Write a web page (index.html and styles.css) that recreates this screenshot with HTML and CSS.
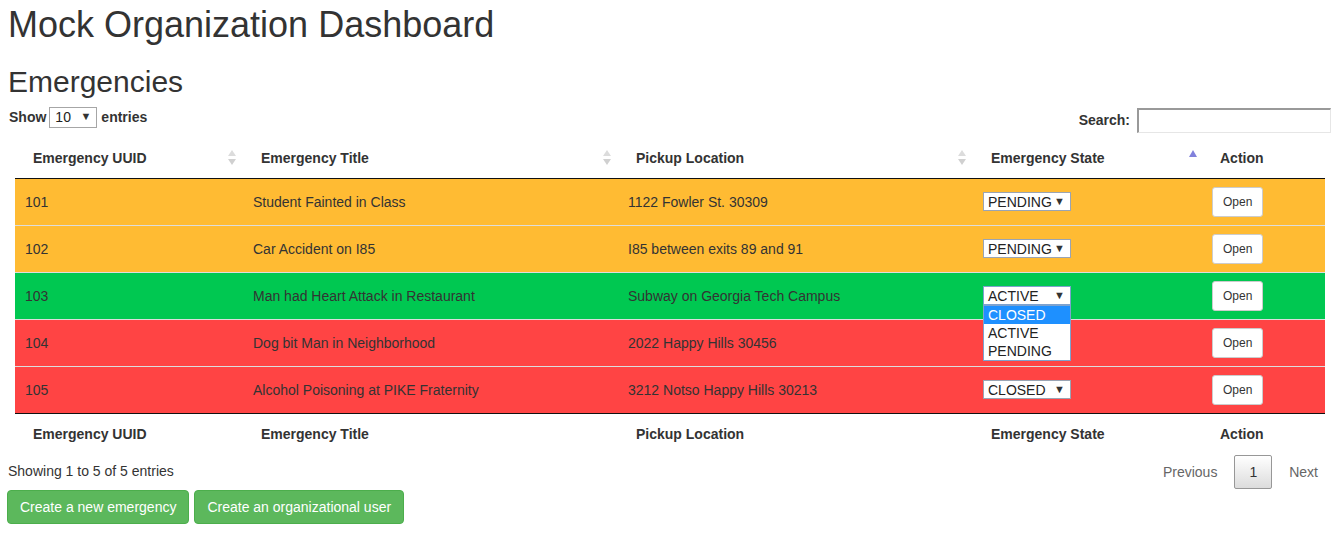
FILE: index.html
```html
<!DOCTYPE html>
<html>
<head>
<meta charset="utf-8">
<title>Mock Organization Dashboard</title>
<link rel="stylesheet" href="styles.css">
</head>
<body>
<div class="page">
  <h1 class="title">Mock Organization Dashboard</h1>
  <h2 class="subtitle">Emergencies</h2>

  <div class="dt-top">
    <label class="dt-length">Show <span class="sel sel-len">10<span class="arrow">&#9660;</span></span> entries</label>
    <label class="dt-filter">Search: <span class="search-input"></span></label>
  </div>

  <div class="table-wrap">
    <table class="dt">
      <colgroup>
        <col class="c1"><col class="c2"><col class="c3"><col class="c4"><col class="c5">
      </colgroup>
      <thead>
        <tr>
          <th class="sortable">Emergency UUID<span class="sort-both"><i class="up"></i><i class="down"></i></span></th>
          <th class="sortable">Emergency Title<span class="sort-both"><i class="up"></i><i class="down"></i></span></th>
          <th class="sortable">Pickup Location<span class="sort-both"><i class="up"></i><i class="down"></i></span></th>
          <th class="sortable">Emergency State<span class="sort-asc"></span></th>
          <th>Action</th>
        </tr>
      </thead>
      <tbody>
        <tr class="warn">
          <td>101</td><td>Student Fainted in Class</td><td>1122 Fowler St. 30309</td>
          <td><span class="sel sel-state">PENDING<span class="arrow">&#9660;</span></span></td>
          <td><button class="btn-open">Open</button></td>
        </tr>
        <tr class="warn">
          <td>102</td><td>Car Accident on I85</td><td>I85 between exits 89 and 91</td>
          <td><span class="sel sel-state">PENDING<span class="arrow">&#9660;</span></span></td>
          <td><button class="btn-open">Open</button></td>
        </tr>
        <tr class="ok">
          <td>103</td><td>Man had Heart Attack in Restaurant</td><td>Subway on Georgia Tech Campus</td>
          <td class="state-cell">
            <span class="sel sel-state sel-open">ACTIVE<span class="arrow">&#9660;</span></span>
            <ul class="dropdown">
              <li class="hl">CLOSED</li>
              <li>ACTIVE</li>
              <li>PENDING</li>
            </ul>
          </td>
          <td><button class="btn-open">Open</button></td>
        </tr>
        <tr class="danger">
          <td>104</td><td>Dog bit Man in Neighborhood</td><td>2022 Happy Hills 30456</td>
          <td></td>
          <td><button class="btn-open">Open</button></td>
        </tr>
        <tr class="danger">
          <td>105</td><td>Alcohol Poisoning at PIKE Fraternity</td><td>3212 Notso Happy Hills 30213</td>
          <td><span class="sel sel-state">CLOSED<span class="arrow">&#9660;</span></span></td>
          <td><button class="btn-open">Open</button></td>
        </tr>
      </tbody>
      <tfoot>
        <tr>
          <th>Emergency UUID</th>
          <th>Emergency Title</th>
          <th>Pickup Location</th>
          <th>Emergency State</th>
          <th>Action</th>
        </tr>
      </tfoot>
    </table>
  </div>

  <div class="dt-bottom">
    <div class="dt-info">Showing 1 to 5 of 5 entries</div>
    <div class="dt-paginate">
      <span class="pg disabled">Previous</span>
      <span class="pg current">1</span>
      <span class="pg disabled">Next</span>
    </div>
  </div>

  <div class="actions">
    <button class="btn-success">Create a new emergency</button>
    <button class="btn-success">Create an organizational user</button>
  </div>
</div>
</body>
</html>
```

FILE: styles.css
```css
* { box-sizing: border-box; }

html, body {
  margin: 0;
  padding: 0;
  background: #fff;
}

body {
  font-family: "Liberation Sans", Arial, sans-serif;
  font-size: 14px;
  line-height: 20px;
  color: #333;
}

.page {
  padding: 5px 8px 0 8px;
}

.title {
  font-size: 36px;
  line-height: 1.1;
  font-weight: 500;
  margin: 0 0 10px 0;
}

.subtitle {
  font-size: 30px;
  line-height: 1.1;
  font-weight: 500;
  margin: 20px 0 10px 0;
}

.dt-top {
  display: flex;
  justify-content: space-between;
  align-items: flex-start;
  padding-right: 4px;
  margin-top: -1px;
}

.dt-length {
  font-weight: bold;
  display: flex;
  align-items: center;
  height: 21px;
  padding-left: 1px;
}

.dt-filter {
  font-weight: bold;
  display: flex;
  align-items: center;
  gap: 7px;
  height: 25px;
  margin-top: 1px;
}

.search-input {
  display: block;
  width: 194px;
  height: 25px;
  border-style: solid;
  border-width: 2px 1px 1px 2px;
  border-color: #999 #e6e6e6 #e6e6e6 #999;
  background: #fff;
}

.sel {
  position: relative;
  display: inline-flex;
  align-items: center;
  background: #fff;
  border: 1px solid #a6a6a6;
  font-weight: normal;
  color: #222;
  font-size: 14px;
  line-height: 18px;
}

.sel .arrow {
  position: absolute;
  right: 5px;
  top: 0;
  font-size: 11px;
  line-height: 17px;
  color: #333;
}

.sel-len {
  width: 48px;
  height: 21px;
  padding-left: 5px;
  margin: 0 4px 0 3px;
}

.sel-state {
  width: 88px;
  height: 19px;
  padding-left: 4px;
  border-color: #9aa4b4;
}

.sel-open {
  border-color: #7da2ce;
}

.table-wrap {
  padding-left: 7px;
  margin-top: 5px;
}

.dt {
  width: 1310px;
  border-collapse: collapse;
  table-layout: fixed;
}

.c1 { width: 228px; }
.c2 { width: 375px; }
.c3 { width: 355px; }
.c4 { width: 229px; }
.c5 { width: 123px; }

.dt thead th {
  position: relative;
  text-align: left;
  font-weight: bold;
  padding: 10px 18px;
  line-height: 20px;
  border-bottom: 1px solid #111;
}

.dt tfoot th {
  text-align: left;
  font-weight: bold;
  padding: 10px 18px 6px 18px;
  line-height: 20px;
  border-top: 1px solid #111;
}

.sort-both {
  position: absolute;
  right: 7px;
  top: 12px;
  width: 8px;
  height: 15px;
  display: flex;
  flex-direction: column;
  justify-content: space-between;
}

.sort-both .up {
  display: block;
  width: 0;
  height: 0;
  border-left: 4px solid transparent;
  border-right: 4px solid transparent;
  border-bottom: 6px solid #dcdcdc;
}

.sort-both .down {
  display: block;
  width: 0;
  height: 0;
  border-left: 4px solid transparent;
  border-right: 4px solid transparent;
  border-top: 6px solid #d0d0d0;
}

.sort-asc {
  position: absolute;
  right: 5px;
  top: 12px;
  width: 0;
  height: 0;
  border-left: 4.5px solid transparent;
  border-right: 4.5px solid transparent;
  border-bottom: 7px solid #8181dc;
}

.dt tbody td {
  padding: 8px 10px;
  height: 46px;
  line-height: 20px;
  vertical-align: middle;
  border-top: 1px solid #ddd;
}

.dt tbody tr:first-child td {
  border-top: none;
}

.dt tbody tr.warn { background: #ffbb33; }
.dt tbody tr.ok { background: #00c851; }
.dt tbody tr.danger { background: #ff4444; }

.state-cell {
  position: relative;
}

.dropdown {
  position: absolute;
  left: 10px;
  top: 32px;
  width: 88px;
  margin: 0;
  padding: 0;
  list-style: none;
  background: #fff;
  border: 1px solid #7da2ce;
  z-index: 5;
}

.dropdown li {
  height: 18px;
  line-height: 18px;
  padding-left: 4px;
  font-size: 14px;
  color: #222;
}

.dropdown li.hl {
  background: #1e90ff;
  color: #fff;
}

.btn-open {
  font-family: "Liberation Sans", Arial, sans-serif;
  font-size: 12px;
  line-height: 18px;
  padding: 5px 10px;
  height: 30px;
  width: 51px;
  color: #333;
  background: #fff;
  border: 1px solid #ccc;
  border-radius: 3px;
}

.dt-bottom {
  display: flex;
  justify-content: space-between;
  align-items: flex-start;
  padding-right: 2px;
  height: 39px;
}

.dt-info {
  padding-top: 11px;
  line-height: 20px;
}

.dt-paginate {
  display: flex;
  align-items: center;
  gap: 2px;
  padding-top: 5px;
}

.pg {
  display: block;
  padding: 7px 14px;
  line-height: 18px;
  border: 1px solid transparent;
  border-radius: 2px;
  color: #666;
}

.pg.current {
  color: #333;
  border-color: #979797;
  background: linear-gradient(to bottom, #ffffff 0%, #dcdcdc 100%);
  height: 34px;
}

.actions {
  display: flex;
  gap: 5px;
  margin-top: 1px;
  margin-left: -1px;
}

.btn-success {
  font-family: "Liberation Sans", Arial, sans-serif;
  font-size: 14px;
  line-height: 20px;
  padding: 6px 12px;
  height: 34px;
  color: #fff;
  background: #5cb85c;
  border: 1px solid #4cae4c;
  border-radius: 4px;
}
```
